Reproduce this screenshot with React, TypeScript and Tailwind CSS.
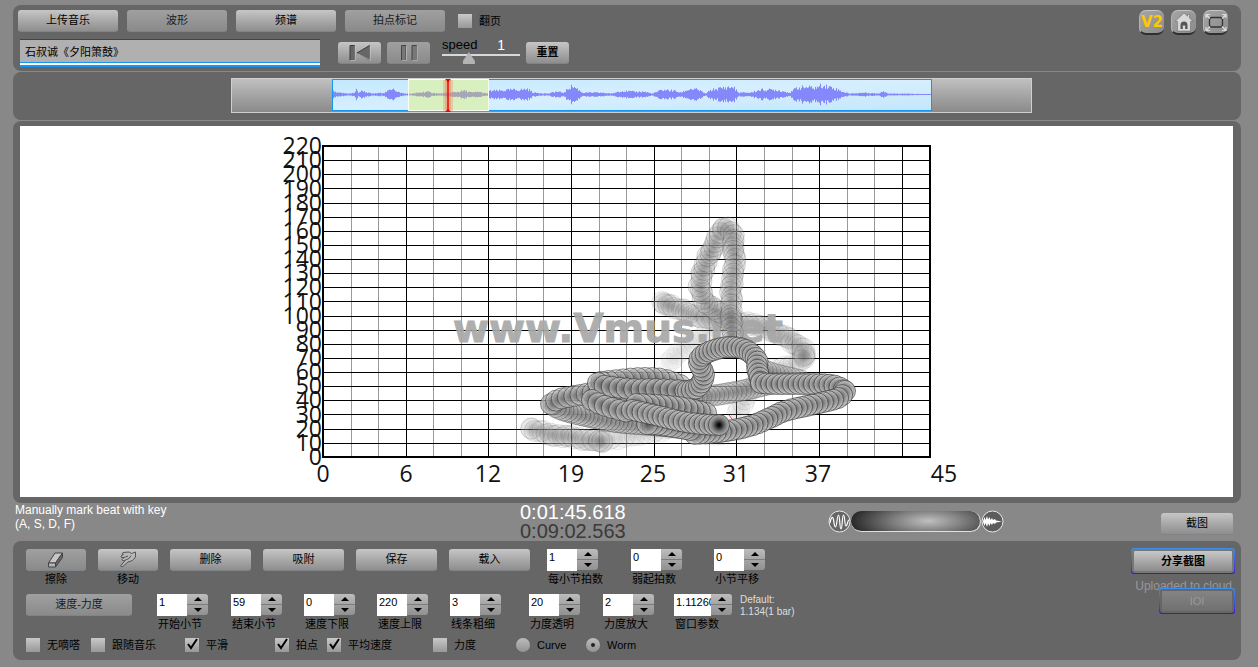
import React, { useId } from "react";

type Pt = [number, number];

/* ---------- waveform ---------- */

const ENVELOPE: Pt[] = [
  [332, 4], [336, 2], [350, 1], [354, 2], [356, 5], [358, 2], [362, 4], [367, 2], [372, 1], [384, 2], [390, 5], [393, 8],
  [396, 3], [404, 1], [412, 1], [426, 3], [438, 1], [450, 2], [458, 3], [464, 4], [472, 2], [478, 3], [486, 1],
  [490, 4], [500, 4], [510, 5], [520, 5], [527, 6], [533, 2], [548, 1], [555, 3], [564, 2], [568, 7], [572, 9],
  [577, 6], [582, 2], [600, 2], [612, 1], [620, 4], [632, 3], [644, 3], [652, 1], [662, 5], [674, 4], [680, 2],
  [690, 6], [698, 5], [705, 1], [711, 5], [722, 7], [733, 8], [738, 2], [750, 2], [760, 5], [775, 5], [790, 2],
  [796, 7], [806, 8], [815, 7], [822, 10], [833, 7], [845, 2], [850, 1], [864, 2], [878, 1], [883, 4], [888, 1],
  [904, 1], [931, 0],
];

function noise(n: number) {
  const s = Math.sin(n * 12.9898) * 43758.5453;
  return s - Math.floor(s);
}

function envelopeAt(x: number) {
  for (let i = 1; i < ENVELOPE.length; i++) {
    const [x0, a0] = ENVELOPE[i - 1];
    const [x1, a1] = ENVELOPE[i];
    if (x <= x1) return a0 + ((a1 - a0) * (x - x0)) / (x1 - x0);
  }
  return 0;
}

function waveBars(from: number, to: number) {
  let d = "";
  for (let x = from; x < to; x++) {
    const a = Math.max(0.5, envelopeAt(x) * (0.6 + 0.6 * noise(x)));
    d += `M${x + 0.5} ${(94.5 - a).toFixed(1)}V${(94.5 + a).toFixed(1)}`;
  }
  return d;
}

function Waveform() {
  return (
    <svg className="ml-[100px] block h-[33px] w-[600px] shrink-0" viewBox="332 79 600 33" aria-label="waveform">
      <defs>
        <linearGradient id="sky" x1="0" y1="0" x2="1" y2="1">
          <stop offset="0" stopColor="#c4e8ff" />
          <stop offset="0.5" stopColor="#d6efff" />
          <stop offset="1" stopColor="#c4e6fb" />
        </linearGradient>
      </defs>
      <rect x="332.5" y="79.5" width="599" height="31" fill="url(#sky)" stroke="#1596f2" />
      <path d={waveBars(333, 931)} stroke="#8488fa" />
      <rect x="408.5" y="79.500" width="80" height="31" fill="#d8f0bf" stroke="#f6fff0" />
      <path d={waveBars(409, 488)} stroke="#a5a8b4" />
      <rect x="443" y="80" width="10" height="31" fill="#f08a70" opacity="0.35" />
      <rect x="445" y="80" width="6" height="31" fill="#ee6a50" opacity="0.3" />
      <path d="M448 79V112" stroke="#e00000" strokeWidth="1.4" />
      <path d="M445 79h6l-3 3zM445 112h6l-3-3z" fill="#f00000" />
    </svg>
  );
}

/* ---------- performance worm ---------- */

interface Trail {
  pts: Pt[];
  step: number;
  alpha: number;
  wobble?: number;
}

const OLD_TRAILS: Trail[] = [
  { pts: [[668, 364], [682, 350], [700, 338], [716, 326]], step: 4, alpha: 0.06, wobble: 2 },
  { pts: [[738, 413], [745, 398], [752, 388], [770, 372], [790, 366], [803, 358]], step: 5, alpha: 0.1, wobble: 3 },
  { pts: [[603, 441], [640, 435], [680, 428], [715, 434], [745, 428]], step: 5, alpha: 0.1, wobble: 3 },
  { pts: [[530, 429], [535, 430], [532, 429], [550, 434], [575, 438], [603, 441], [596, 440], [603, 441]], step: 3, alpha: 0.16, wobble: 3 },
  { pts: [[662, 302], [669, 304], [663, 303], [685, 311], [710, 319], [745, 323], [775, 332], [798, 345], [805, 356], [800, 361], [806, 355]], step: 3, alpha: 0.15, wobble: 3 },
];

const TRAILS: Trail[] = [
  { pts: [[734, 322], [708, 304], [700, 290], [702, 272], [712, 248], [722, 232], [727, 226], [732, 234], [734, 258], [731, 288], [732, 318], [732, 345]], step: 4, alpha: 0.24, wobble: 3 },
  { pts: [[800, 380], [775, 374], [758, 368]], step: 4, alpha: 0.3 },
  { pts: [[770, 384], [740, 391], [710, 396], [690, 398], [650, 398]], step: 4, alpha: 0.35 },
  { pts: [[688, 428], [650, 425], [615, 422], [585, 416], [562, 410], [551, 404]], step: 4, alpha: 0.45 },
  { pts: [[551, 404], [560, 399], [580, 395], [605, 392], [640, 398]], step: 6, alpha: 0.6 },
  { pts: [[680, 385], [662, 379], [640, 378], [618, 380], [600, 382]], step: 7, alpha: 0.6 },
  { pts: [[598, 383], [606, 386], [635, 389], [660, 389], [688, 391]], step: 7, alpha: 0.7 },
  { pts: [[688, 391], [698, 387], [704, 375], [699, 363], [702, 356], [714, 350], [730, 347], [746, 350], [757, 360], [757, 368], [761, 382]], step: 4, alpha: 0.75 },
  { pts: [[761, 383], [775, 384], [800, 384], [832, 385], [845, 391]], step: 5, alpha: 0.75 },
  { pts: [[845, 391], [838, 398], [815, 404], [785, 411], [772, 417], [750, 426], [720, 432], [694, 434]], step: 5, alpha: 0.7 },
  { pts: [[706, 413], [685, 408], [660, 405], [636, 404]], step: 6, alpha: 0.75 },
  { pts: [[690, 430], [660, 425], [645, 424]], step: 5, alpha: 0.65 },
  { pts: [[592, 400], [600, 404], [612, 408], [632, 413]], step: 7, alpha: 0.75 },
  { pts: [[632, 410], [655, 415], [680, 421], [700, 424], [716, 425]], step: 5, alpha: 0.8 },
];

function spline(pts: Pt[], step: number): Pt[] {
  const dense: Pt[] = [];
  for (let i = 0; i < pts.length - 1; i++) {
    const p0 = pts[Math.max(0, i - 1)];
    const p1 = pts[i];
    const p2 = pts[i + 1];
    const p3 = pts[Math.min(pts.length - 1, i + 2)];
    for (let k = 0; k < 40; k++) {
      const t = k / 40;
      const f = (a: number, b: number, c: number, d: number) =>
        0.5 * (2 * b + (c - a) * t + (2 * a - 5 * b + 4 * c - d) * t * t + (3 * b - a - 3 * c + d) * t * t * t);
      dense.push([f(p0[0], p1[0], p2[0], p3[0]), f(p0[1], p1[1], p2[1], p3[1])]);
    }
  }
  dense.push(pts[pts.length - 1]);
  const out: Pt[] = [dense[0]];
  for (const p of dense) {
    const last = out[out.length - 1];
    if (Math.hypot(p[0] - last[0], p[1] - last[1]) >= step) out.push(p);
  }
  return out;
}

function Beads({ trails }: { trails: Trail[] }) {
  return (
    <g>
      {trails.map((trail, n) =>
        spline(trail.pts, trail.step).map(([x, y], i) => {
          const w = trail.wobble ?? 0;
          return (
            <circle
              key={`${n}-${i}`}
              cx={(x + (noise(i + n * 50) - 0.5) * w).toFixed(1)}
              cy={(y + (noise(i + n * 50 + 900) - 0.5) * w).toFixed(1)}
              r="10.5"
              fill="url(#bead)"
              fillOpacity={trail.alpha}
              stroke="#303030"
              strokeWidth="0.7"
              strokeOpacity={Math.min(0.9, trail.alpha * 1.3)}
            />
          );
        }),
      )}
    </g>
  );
}

function Chart() {
  const rows = Array.from({ length: 23 }, (_, i) => i);
  const cols = Array.from({ length: 22 }, (_, i) => i);
  const ticks: [string, number][] = [
    ["0", 323], ["6", 406], ["12", 488], ["19", 571], ["25", 653], ["31", 736], ["37", 818], ["45", 944],
  ];
  return (
    <svg className="h-[371px] w-[701px]" viewBox="276 126 701 371" aria-label="tempo-dynamics worm">
      <defs>
        <radialGradient id="bead">
          <stop offset="0" stopColor="#3c3c3c" />
          <stop offset="0.45" stopColor="#767676" />
          <stop offset="1" stopColor="#cecece" />
        </radialGradient>
        <radialGradient id="head">
          <stop offset="0" stopColor="#000" />
          <stop offset="0.15" stopColor="#111" />
          <stop offset="0.6" stopColor="#777" />
          <stop offset="1" stopColor="#b4b4b4" />
        </radialGradient>
      </defs>
      <g shapeRendering="crispEdges">
        {cols.map((i) => (
          <path key={i} d={`M${Math.round(323 + i * 27.56) + 0.5} 146V458`} stroke={i % 3 === 0 ? "#000" : "#9a9a9a"} />
        ))}
        {rows.map((i) => (
          <path key={i} d={`M323 ${Math.round(146 + i * 14.13) + 0.5}H930`} stroke="#000" />
        ))}
        <rect x="323" y="146" width="607" height="311" fill="none" stroke="#000" strokeWidth="2" />
      </g>
      <g fontFamily='"Open Sans", "Noto Sans", sans-serif' fontSize="23" fill="#111">
        {rows.map((i) => (
          <text key={i} x="322" y={Math.round(457 - i * 14.13) + 8} textAnchor="end">
            {i * 10}
          </text>
        ))}
        {ticks.map(([t, x]) => (
          <text key={t} x={x} y="482" textAnchor="middle">
            {t}
          </text>
        ))}
      </g>
      <Beads trails={OLD_TRAILS} />
      <text x="453" y="342" fontFamily='"DejaVu Sans", sans-serif' fontWeight="700" fontSize="39" fill="#a8a8a8" stroke="#a8a8a8" opacity="0.93">
        www.Vmus.net
      </text>
      <Beads trails={TRAILS} />
      <path d="M729 415l3 4" stroke="#f03030" />
      <circle cx="719" cy="425" r="10.5" fill="url(#head)" stroke="#444" strokeWidth="0.8" />
    </svg>
  );
}

/* ---------- controls ---------- */

const BTN = "flex h-[22px] shrink-0 items-center justify-center rounded-[3px] border-b border-[#7f8488] text-[11px] leading-none";
const LIGHT = "bg-linear-to-b from-[#c6c6c6] to-[#8e8e8e] text-black";
const DIM = "bg-linear-to-b from-[#a0a0a0] to-[#8a8a8a] text-[#1c1c1c]";

function Spinner({ label, value, wide }: { label: string; value: string; wide?: boolean }) {
  const id = useId();
  return (
    <div className="flex flex-col items-start">
      <div className="flex h-[22px]">
        <input
          id={id}
          type="text"
          defaultValue={value}
          className={`${wide ? "w-[37px]" : "w-[30px]"} h-[22px] bg-white pb-[6px] pl-[2px] text-[11px] text-black outline-none`}
        />
        <div className="flex h-[21px] w-[21px] flex-col overflow-hidden rounded-r-[3px]">
          <button type="button" aria-label={`${label} +`} className="flex flex-1 items-center justify-center border-b border-[#7c7c7c] bg-linear-to-b from-[#bdbdbd] to-[#a6a6a6]">
            <svg className="h-[4px] w-[8px]" viewBox="0 0 8 4"><path d="M0 4L4 0L8 4Z" /></svg>
          </button>
          <button type="button" aria-label={`${label} -`} className="flex flex-1 items-center justify-center bg-linear-to-b from-[#a4a4a4] to-[#919191]">
            <svg className="h-[4px] w-[8px]" viewBox="0 0 8 4"><path d="M0 0L4 4L8 0Z" /></svg>
          </button>
        </div>
      </div>
      <label htmlFor={id} className="pl-px text-[11px] leading-[16px] whitespace-nowrap text-black">
        {label}
      </label>
    </div>
  );
}

function Check({ label, checked }: { label: string; checked?: boolean }) {
  return (
    <label className="relative flex items-center gap-[7px] text-[11px] leading-[16px] whitespace-nowrap text-black">
      <input type="checkbox" defaultChecked={checked} className="peer h-[14px] w-[14px] appearance-none bg-linear-to-b from-[#c8c8c8] to-[#989898]" />
      <svg className="absolute top-px left-[2px] hidden h-[12px] w-[11px] peer-checked:block" viewBox="0 0 11 12">
        <path d="M1 6L4 10L10 1" fill="none" stroke="#000" strokeWidth="2" />
      </svg>
      {label}
    </label>
  );
}

function Radio({ label, checked }: { label: string; checked?: boolean }) {
  return (
    <label className="relative flex items-center gap-[7px] text-[11px] leading-[16px] text-black">
      <input type="radio" name="shape" defaultChecked={checked} className="peer h-[14px] w-[14px] appearance-none rounded-full bg-linear-to-b from-[#bdbdbd] to-[#929292]" />
      <span className="absolute top-[6px] left-[5px] hidden h-[4px] w-[4px] rounded-full bg-[#222] peer-checked:block" />
      {label}
    </label>
  );
}

const CORNER = "flex h-[25px] w-[25px] items-center justify-center rounded-[7px] border-t border-l border-b-2 border-t-[#c4c4c4] border-l-[#b4b4b4] border-b-[#2c3030] bg-linear-to-br from-[#a4a4a4] to-[#8c8c8c]";

export default function App() {
  return (
    <div className="min-h-screen bg-[#888888] pt-[5px] pr-[17px] pb-[7px] pl-[13px] font-['Liberation_Sans','Noto_Sans_CJK_SC',sans-serif]">
      <main className="flex flex-col">
        <section className="flex h-[66px] items-start justify-between rounded-[8px] bg-[#666666] pt-[5px] pr-[13px] pl-[5px]">
          <div className="flex flex-col gap-[7px]">
            <div className="flex items-center gap-[9px]">
              <button type="button" className={`${BTN} ${LIGHT} w-[100px]`}>上传音乐</button>
              <button type="button" className={`${BTN} ${DIM} w-[100px]`}>波形</button>
              <button type="button" className={`${BTN} ${LIGHT} w-[100px]`}>频谱</button>
              <button type="button" className={`${BTN} ${DIM} w-[100px]`}>拍点标记</button>
              <div className="pl-[4px]"><Check label="翻页" /></div>
            </div>
            <div className="flex items-start pl-[2px]">
              <input
                aria-label="title"
                defaultValue="石叔诚《夕阳箫鼓》"
                className="h-[28px] w-[300px] border-t border-b-2 border-t-[#444] border-b-[#1596f2] bg-[#b0b0b0] pb-[4px] pl-[5px] text-[11px] text-black shadow-[inset_0_-2px_0_#ffffff,inset_0_-3px_0_#1596f2] outline-none"
              />
              <div className="flex gap-[6px] pt-[3px] pl-[18px]">
                <button type="button" aria-label="back to start" className={`${BTN} ${LIGHT} w-[43px]`}>
                  <svg className="h-[16px] w-[22px]" viewBox="0 0 22 16">
                    <path d="M1 .5h4.500v15H1zM20.500 .5v15L8 8z" fill="#666" stroke="#3c3c3c" />
                    <path d="M1 15.500h5V1M8.500 8.500l12.500 7V1" fill="none" stroke="#d8d8d8" strokeWidth=".7" />
                  </svg>
                </button>
                <button type="button" aria-label="pause" className={`${BTN} ${DIM} w-[43px]`}>
                  <svg className="h-[16px] w-[18px]" viewBox="0 0 18 16">
                    <path d="M1.500 .5h4.500v15h-4.500zM12 .5h4.500v15H12z" fill="#777" stroke="#444" />
                    <path d="M1.500 15.500h5V1M12 15.500h5V1" fill="none" stroke="#d0d0d0" strokeWidth=".7" />
                  </svg>
                </button>
              </div>
              <div className="w-[90px] pl-[12px]">
                <div className="flex justify-between pr-[15px] text-[13px] leading-[12px] text-black">
                  <label htmlFor="speed">speed</label>
                  <output className="text-[14px] text-white">1</output>
                </div>
                <input
                  id="speed"
                  type="range"
                  min="0"
                  max="3"
                  step="any"
                  defaultValue="0.950"
                  className="block h-[14px] w-[78px] appearance-none bg-transparent bg-[linear-gradient(#d8d8d8,#d8d8d8)] bg-[length:100%_2px] bg-[position:0_3px] bg-no-repeat [&::-webkit-slider-thumb]:h-[12px] [&::-webkit-slider-thumb]:w-[12px] [&::-webkit-slider-thumb]:appearance-none [&::-webkit-slider-thumb]:bg-[#b4b4b4] [&::-webkit-slider-thumb]:[clip-path:polygon(50%_0,100%_75%,100%_100%,0_100%,0_75%)]"
                />
              </div>
              <div className="pt-[3px] pl-[6px]">
                <button type="button" className={`${BTN} ${LIGHT} w-[43px] font-bold`}>重置</button>
              </div>
            </div>
          </div>
          <nav className="flex gap-[7px]">
            <a href="#v2" className={`${CORNER} font-['DejaVu_Sans',sans-serif] text-[15px] font-bold text-[#ffc800]`}>V2</a>
            <a href="#home" aria-label="home" className={CORNER}>
              <svg className="h-[20px] w-[20px] shrink-0" viewBox="0 0 20 20">
                <path d="M10 1L1 9.500h2.500V19h13V9.500H19L15.500 6V2.500h-2v1.800z" fill="#d8d8d8" stroke="#606060" strokeWidth=".5" />
                <path d="M6.500 17v-4q0-3.500 3.500-3.500t3.500 3.500v4h-2.300v-3.500H8.800V17z" fill="#555" />
              </svg>
            </a>
            <a href="#full" aria-label="full screen" className={CORNER}>
              <svg className="h-[19px] w-[22px] shrink-0" viewBox="0 0 22 19" fill="none">
                <rect x="4.500" y="4.500" width="13" height="9.500" rx="2.500" stroke="#333" strokeWidth="1.300" />
                <path d="M1 5V1.500h4M1 1.500l4 4M17 1.500h4V5M21 1.500l-4 4M1 14v3.500h4M1 17.500l4-4M17 17.500h4V14M21 17.500l-4-4" stroke="#dcdcdc" strokeWidth="1.200" />
              </svg>
            </a>
          </nav>
        </section>

        <section className="mt-px flex h-[48px] items-start justify-center rounded-[8px] bg-[#666666] pt-[6px] pl-[9px]">
          <div className="flex h-[35px] w-[801px] border border-[#cfcfcf] bg-linear-to-b from-[#c0c0c0] to-[#8a8a8a]">
            <Waveform />
          </div>
        </section>

        <section className="mt-px flex rounded-[8px] bg-[#666666] pt-[5px] pr-[8px] pb-[6px] pl-[7px]">
          <div className="flex flex-1 justify-center bg-white">
            <Chart />
          </div>
        </section>

        <section className="flex h-[38px] items-start pr-[8px] pl-[2px]">
          <p className="w-[505px] text-[12px] leading-[14px] text-white">
            Manually mark beat with key<br />(A, S, D, F)
          </p>
          <div className="text-[20px] leading-[19px]">
            <div className="text-white">0:01:45.618</div>
            <div className="text-[#3a3a3a]">0:09:02.563</div>
          </div>
          <div className="flex items-center pt-[7px] pl-[202px]">
            <svg className="h-[23px] w-[23px]" viewBox="0 0 23 23">
              <circle cx="11.500" cy="11.500" r="10.500" fill="#666" stroke="#e8e8e8" />
              <path d="M2 13C3 8 4 6 5 8S6 17 7.500 17 9 5 10.500 5 11.500 19 13 19 14 5 15.500 5 16.500 16 18 16 19.500 10 21 10" fill="none" stroke="#fff" strokeWidth="1.200" />
            </svg>
            <div className="h-[21px] w-[130px] rounded-full border-r border-b border-[#e0e0e0] bg-[radial-gradient(ellipse_80px_24px_at_60%_50%,#c0c0c0_0%,#7c7c7c_45%,#242424_100%)]" />
            <svg className="h-[23px] w-[23px]" viewBox="0 0 23 23">
              <circle cx="11.500" cy="11.500" r="10.500" fill="#5c5c5c" stroke="#e8e8e8" />
              <path d="M2 11L3.500 7 4.500 10 6 6 7 9.500 8.500 7 9.500 10 11 8 12 10 14 9 15 10.500 21 11.500 15 12.500 14 14 12 13 11 15 9.500 13 8.500 16 7 13.500 6 17 4.500 13 3.500 16 2 12Z" fill="#fff" />
            </svg>
          </div>
          <div className="ml-auto pt-[10px]">
            <button type="button" className={`${BTN} ${LIGHT} w-[72px]`}>截图</button>
          </div>
        </section>

        <section className="flex h-[119px] items-start justify-between rounded-[8px] bg-[#666666] pt-[7px] pr-[6px] pl-[13px]">
          <div className="flex flex-col pt-px">
            <div className="flex h-[45px] items-start gap-[12px]">
              <div className="flex flex-col items-center">
                <button type="button" aria-labelledby="erase" className={`${BTN} ${DIM} w-[60px]`}>
                  <svg className="h-[16px] w-[18px]" viewBox="0 0 18 16" stroke="#444" strokeLinejoin="round">
                    <path d="M8 1H15.500L8.500 11H1.500Z" fill="#c6c6c6" />
                    <path d="M1.500 11H8.500V15H1.500Z" fill="#b4b4b4" />
                    <path d="M15.500 1V5.500L8.500 15V11Z" fill="#666" />
                  </svg>
                </button>
                <span id="erase" className="text-[11px] leading-[16px] text-black">擦除</span>
              </div>
              <div className="flex flex-col items-center">
                <button type="button" aria-labelledby="move" className={`${BTN} ${LIGHT} w-[60px]`}>
                  <svg className="h-[17px] w-[18px]" viewBox="0 0 18 17">
                    <path d="M16.500 1V6L13.500 9.500 9 11 3 16 1.500 15 6.500 9 4 10 3 8.500 5 6.500 2.500 6.500 2 5 4.500 3.500 3 3 4 1.500 10 1 12.500 2.500Z" fill="#b8b8b8" stroke="#555" strokeLinejoin="round" />
                    <path d="M5 6.500L9 5M6.500 9L10 7.500L12 4.500" fill="none" stroke="#555" />
                  </svg>
                </button>
                <span id="move" className="text-[11px] leading-[16px] text-black">移动</span>
              </div>
              <button type="button" className={`${BTN} ${LIGHT} w-[81px]`}>删除</button>
              <button type="button" className={`${BTN} ${LIGHT} w-[81px]`}>吸附</button>
              <button type="button" className={`${BTN} ${LIGHT} w-[81px]`}>保存</button>
              <button type="button" className={`${BTN} ${LIGHT} w-[81px]`}>载入</button>
              <div className="grid grid-cols-[84px_83px_84px] pl-[5px]">
                <Spinner label="每小节拍数" value="1" />
                <Spinner label="弱起拍数" value="0" />
                <Spinner label="小节平移" value="0" />
              </div>
            </div>
            <div className="grid h-[43px] grid-cols-[131px_74px_73px_73px_73px_79px_74px_71px_66px_auto] items-start">
              <button type="button" className={`${BTN} ${DIM} w-[106px]`}>速度-力度</button>
              <Spinner label="开始小节" value="1" />
              <Spinner label="结束小节" value="59" />
              <Spinner label="速度下限" value="0" />
              <Spinner label="速度上限" value="220" />
              <Spinner label="线条粗细" value="3" />
              <Spinner label="力度透明" value="20" />
              <Spinner label="力度放大" value="2" />
              <Spinner label="窗口参数" value="1.11260" wide />
              <p className="text-[10px] leading-[12px] whitespace-nowrap text-[#dedede]">Default:<br />1.134(1 bar)</p>
            </div>
            <div className="grid grid-cols-[65px_94px_90px_52px_106px_83px_70px_auto]">
              <Check label="无嘀嗒" />
              <Check label="跟随音乐" />
              <Check label="平滑" checked />
              <Check label="拍点" checked />
              <Check label="平均速度" checked />
              <Check label="力度" />
              <Radio label="Curve" />
              <Radio label="Worm" checked />
            </div>
          </div>
          <div className="flex flex-col items-end">
            <div className="rounded-[3px] bg-linear-to-b from-[#3d8ff0] to-[#3b12d0] p-px">
              <button type="button" className="flex h-[24px] w-[102px] items-center justify-center rounded-[3px] border-2 border-[#777] bg-linear-to-b from-[#c8c8c8] to-[#8c8c8c] text-[11px] font-bold text-black">分享截图</button>
            </div>
            <p className="pt-[5px] pr-[3px] text-[12px] leading-[14px] whitespace-nowrap text-[#989898]">Uploaded to cloud</p>
            <div className="-mt-[5px] rounded-[3px] bg-linear-to-b from-[#3d8ff0] to-[#3b12d0] p-px">
              <button type="button" className="flex h-[24px] w-[74px] items-center justify-center rounded-[3px] border-2 border-[#666] bg-linear-to-b from-[#848484] to-[#707070] text-[11px] text-[#999]">IOI</button>
            </div>
          </div>
        </section>
      </main>
    </div>
  );
}
